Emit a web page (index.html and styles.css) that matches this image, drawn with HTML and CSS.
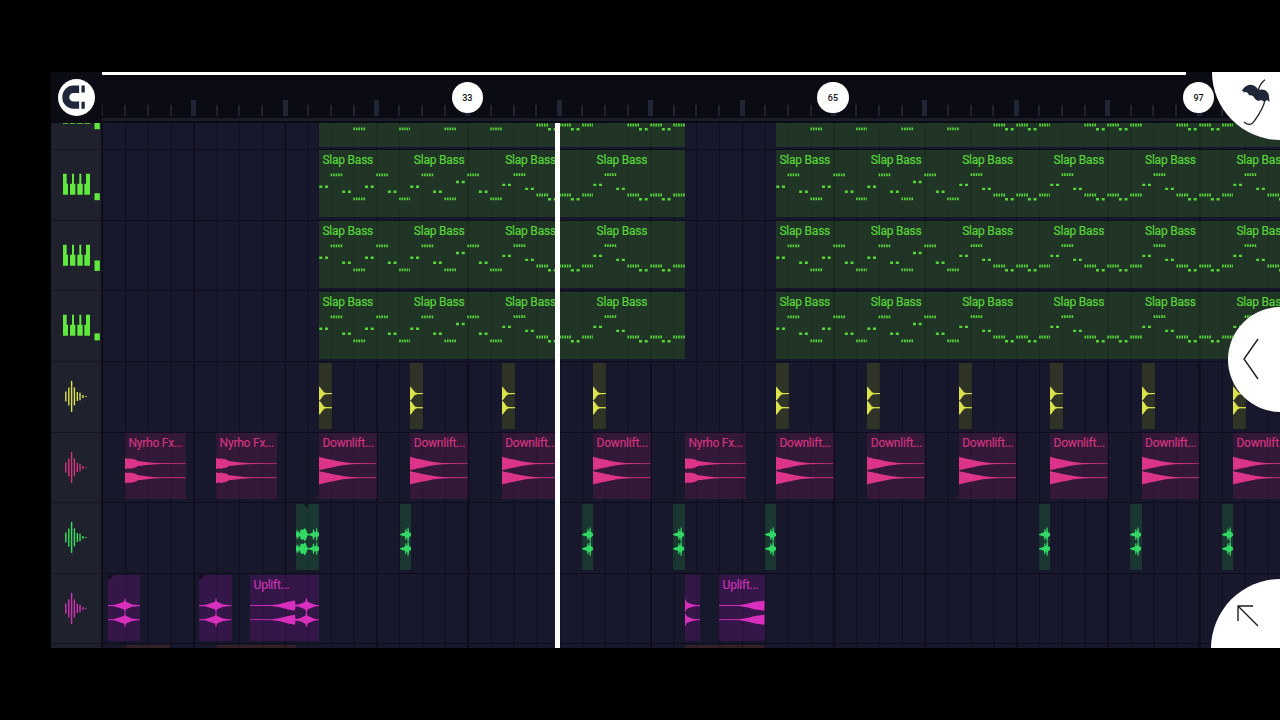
FILE: index.html
```html
<!DOCTYPE html>
<html lang="en">
<head>
<meta charset="utf-8">
<title>Playlist</title>
<link rel="stylesheet" href="styles.css">
</head>
<body>
<main class="app">
  <header class="header">
    <div class="corner">
      <button class="snap" aria-label="Snap">
        <svg viewBox="54 43 112 112"><path d="M118 63H100A33 35 0 0 0 100 133H118V111H101A13 13 0 0 1 101 85H118ZM125 63h10v21h-10zM125 112h10v21h-10z"/></svg>
      </button>
    </div>
    <div class="ruler">
      <div class="progress"></div>
      <div class="ticks"></div>
      <div class="ruler-edge"></div>
    </div>
  </header>
  <section class="playlist">
    <aside class="tracks"></aside>
    <div class="lanes"></div>
  </section>
  <div class="playhead"></div>
  <button class="round logo" aria-label="Menu">
    <svg viewBox="240 40 100 155"><path d="M245 83Q254 64 272 63Q289 65 295 79Q316 73 326 91L329 115L321 109L313 115Q307 108 301 110L294 112Q284 108 281 99Q275 94 267 95L264 89Q257 82 251 87L250 82Z"/><path class="stick" d="M315 48Q299 61 295 79M315 109C311 132 295 155 284 171Q271 191 252 175"/></svg>
  </button>
  <button class="round back" aria-label="Open panel">
    <svg viewBox="0 0 16 42"><path d="M15 1L1 21L15 41"/></svg>
  </button>
  <button class="round expand" aria-label="Expand">
    <svg viewBox="0 0 22 22"><path d="M1 16V1H16M1 1L21 21"/></svg>
  </button>
</main>
<script src="main.js"></script>
</body>
</html>
```
FILE: styles.css
```css
* { box-sizing: border-box; }
body {
  margin: 0;
  height: 720px;
  padding: 72px 0 72px 51px;
  background: #000;
  overflow: hidden;
  font-family: Roboto, "Liberation Sans", sans-serif;
}
button { border: 0; padding: 0; background: #fff; }
.app {
  position: relative;
  width: 1229px;
  height: 576px;
  overflow: hidden;
  background: #0b0b15;
}
.header { display: flex; height: 51px; background: #0b0b14; }
.corner { width: 51px; padding: 7px 0 0 7px; flex: none; }
.snap {
  display: block;
  width: 37px;
  height: 37px;
  border-radius: 50%;
}
.snap svg { display: block; width: 37px; height: 37px; fill: #20273a; }
.ruler {
  flex: 1;
  display: flex;
  flex-direction: column;
  overflow: hidden;
}
.progress { width: 1084px; height: 3px; background: #fff; flex: none; }
.ticks {
  display: grid;
  height: 43px;
  flex: none;
  align-items: end;
}
.tick {
  grid-area: 1 / 1;
  width: 2px;
  height: 11px;
  margin-bottom: 2.5px;
  background: #20232f;
}
.tick.major { width: 5px; height: 16px; background: #1f2535; }
.marker {
  grid-area: 1 / 1;
  z-index: 1;
  display: flex;
  align-items: center;
  justify-content: center;
  width: 31.4px;
  height: 31.4px;
  margin-bottom: 4.8px;
  border-radius: 50%;
  background: #fff;
  color: #111;
  font-size: 9px;
  font-weight: 500;
}
.ruler-edge { height: 3px; background: #1c1d2a; flex: none; }

.playlist { display: flex; height: 525px; overflow: hidden; }
.tracks { width: 51px; flex: none; background: #1f212c; border-right: 1px solid #10111a; }
.track { height: 70.65px; border-top: 1.4px solid #151620; }
.track svg { display: block; width: 50px; height: 69px; }
.track.partial, .lane.partial { margin-top: -44.65px; }
.lanes {
  flex: 1;
  overflow: hidden;
  background: #18182c;
  border-left: 1px solid #0b0b18;
}
.lane {
  display: grid;
  align-items: start;
  justify-items: start;
  height: 70.65px;
  border-top: 1.4px solid #0d0d1d;
  width: 1177px;
  overflow: hidden;
}
.gridlines { grid-area: 1 / 1; width: 1177px; height: 69.2px; display: block; }
.clip {
  grid-area: 1 / 1;
  height: 66px;
  margin-top: 0.8px;
  overflow: hidden;
  white-space: nowrap;
  display: grid;
}
.clip span {
  grid-area: 1 / 1;
  padding: 3px 0 0 3.4px;
  font-size: 12px;
  letter-spacing: -0.22px;
  line-height: 15px;
  -webkit-text-stroke: 0.2px currentColor;
}
.clip svg { grid-area: 1 / 1; display: block; height: 66px; }
.bass { color: #58d33a; background: rgba(40, 82, 32, 0.5); }
.bass.clip { height: 67px; margin-top: 0.3px; }
.hit { color: #dce24a; background: rgba(70, 80, 34, 0.5); }
.down { color: #dc3489; background: rgba(78, 24, 68, 0.5); }
.down span { color: #d0347f; }
.vox { color: #33d965; background: rgba(28, 88, 54, 0.5); }
.up { color: #d92fbd; background: rgba(80, 20, 100, 0.5); }
.up span { color: #c634ae; }
.amber { background: rgba(90, 45, 30, 0.4); }
.line { stroke: currentColor; }

.playhead {
  position: absolute;
  left: 504px;
  top: 51px;
  width: 5px;
  height: 525px;
  background: #fff;
}
.round {
  position: absolute;
  border-radius: 50%;
}
.round svg { position: absolute; fill: none; stroke: #1d1d26; stroke-width: 1.4; }
.logo { left: 1160.5px; top: -68px; width: 137px; height: 136px; }
.logo svg { left: 28px; top: 73.3px; width: 33.3px; height: 51.7px; fill: #1f2638; stroke: none; }
.logo .stick { fill: none; stroke: #22252e; stroke-width: 4; }
.back { left: 1177px; top: 235px; width: 105px; height: 105px; }
.back svg { left: 15px; top: 31px; width: 16px; height: 42px; }
.expand { left: 1160px; top: 507px; width: 139px; height: 139px; }
.expand svg { left: 26px; top: 26px; width: 22px; height: 22px; }
```
FILE: main.js
```js
const STEP = 22.85;   // two bars
const BLOCK = STEP * 4;
const at = (n) => 216 + n * BLOCK;

// Ruler
const ticks = document.querySelector('.ticks');
let ruler = '';
for (let i = 0; i * STEP < 1170; i++) {
  const major = i % 4 === 0 && i > 0;
  ruler += `<i class="tick${major ? ' major' : ''}" style="margin-left:${(i * STEP - (major ? 2.2 : 0.8)).toFixed(1)}px"></i>`;
}
[33, 65, 97].forEach((bar, i) => {
  ruler += `<b class="marker" style="margin-left:${((i + 1) * BLOCK * 4 - 16).toFixed(1)}px">${bar}</b>`;
});
ticks.innerHTML = ruler;

// Note patterns of the bass clips: pairs of notes alternate with runs of five
const LEVELS = {
  A: [36.8, 24.8, 41.8, 48.8, 36.8, 24.8, 41.8, 48.8],
  B: [36.8, 24.8, 41.8, 48.8, 32, 24.8, 41.8, 48.8],
  C: [34.9, 24.6, 38.9, 45, 49.2, 45, 49.2, 45],
};
const RUNS = { A: [1, 3, 5, 7], B: [1, 3, 5, 7], C: [1, 3, 5, 7] };
function notes(kind) {
  let d = '';
  LEVELS[kind].forEach((y, i) => {
    const x = i * BLOCK / 8;
    if (RUNS[kind].includes(i)) {
      for (let k = 0; k < 5; k++) d += `M${x + 0.2 + k * 2.5} ${y - 1.4}h1.6v2.8h-1.6z`;
    } else {
      for (const o of [0.3, 6]) d += `M${x + o} ${y - 1.2}h3v2.4h-3z`;
    }
  });
  return `<path fill="currentColor" d="${d}"/>`;
}

// Stereo waveform: envelope points [x, half height] mirrored round both channel axes
function wave(points, w) {
  let out = '';
  for (const c of [30.6, 44.7]) {
    const top = points.map(([x, h]) => `${x} ${c - h}`);
    const low = points.slice().reverse().map(([x, h]) => `${x} ${c + h}`);
    out += `<path fill="currentColor" d="M${top.concat(low).join('L')}Z"/><path class="line" stroke-opacity=".55" d="M0 ${c}H${w}"/>`;
  }
  return out;
}
const SHAPES = {
  hit: [[0, 7], [1.2, 6.2], [2.4, 4.6], [3.6, 3], [5, 1.3], [7, 0.6], [13, 0.5]],
  down: [[0, 7], [2, 6], [4, 5.8], [6, 5.2], [9, 4.6], [13, 3.8], [18, 2.7], [24, 1.6], [32, 0.7], [40, 0.3], [57, 0.2]],
  nyrho: [[0, 5.5], [3, 4.8], [5, 5.2], [8, 4.5], [10, 4.2], [13, 2.5], [20, 1.7], [28, 0.8], [36, 0.3], [60, 0.2]],
  vox: [[0, 0.3], [3, 1.5], [5, 2], [5.4, 5.5], [6.2, 5.5], [6.6, 2.8], [7.3, 3.2], [7.6, 7], [8.6, 7], [9, 2.6], [11, 1.2]],
  voxLong: [[0, 6], [0.8, 1.5], [1.6, 4], [2.4, 4], [3, 1.5], [4, 2], [4.8, 5], [8, 5], [8.5, 6.5], [9.2, 6], [10, 5], [11, 2], [12, 0.4], [14, 1], [16.5, 1.6], [17, 5], [18, 5], [18.6, 2], [20, 3], [20.3, 6.5], [21, 6.5], [21.5, 2], [23, 2]],
  peak: [[0, 0.3], [6, 0.6], [11, 2.2], [14, 3.2], [16.2, 4], [16.6, 7], [17.4, 7], [17.8, 4], [20, 3], [24, 1.2], [32, 0.3]],
  fall: [[0, 7], [0.8, 5.5], [1.6, 3.6], [5, 2], [9, 0.8], [15, 0.4]],
  rise: [[0, 0.3], [20, 0.4], [29, 2], [36, 3.8], [45.5, 5]],
  riseLong: [[0, 0.3], [21, 0.3], [30, 1.6], [38, 3.8], [45, 5], [45.4, 1], [48, 1], [52, 2.4], [55.5, 4.2], [56, 7], [57, 7], [57.5, 4], [61, 2.4], [65, 0.8], [69, 0.3]],
};

function clip(cls, x, w, art = '', label = '') {
  return `<div class="clip ${cls}" style="margin-left:${x.toFixed(1)}px;width:${w.toFixed(1)}px">` +
    `<svg width="${w}" height="66" viewBox="0 0 ${w} 66">${art}</svg>${label ? `<span>${label}</span>` : ''}</div>`;
}

let g = '';
for (let i = 1; i < 52; i++) {
  const w = i % 16 === 0 ? 2.4 : i % 4 === 0 ? 1.6 : 1;
  g += `<path stroke="#0c0c1c" stroke-opacity="${i % 4 ? 0.7 : 0.9}" stroke-width="${w}" d="M${(i * STEP - 0.3).toFixed(1)} 0V70"/>`;
}
const gridlines = `<svg class="gridlines">${g}</svg>`;

const bassLane = (label) => [[0, 'A'], [1, 'B'], [2, 'C'], [3, 'C'], [5, 'A'], [6, 'B'], [7, 'C'], [8, 'C'], [9, 'C'], [10, 'C']]
  .map(([n, k]) => clip('bass', at(n), BLOCK, notes(k), label)).join('');
const bass = bassLane('Slap Bass');
const starts = [0, 1, 2, 3, 5, 6, 7, 8, 9, 10];
const hits = starts.map((n) => clip('hit', at(n), 13, wave(SHAPES.hit, 13))).join('');
const downs = starts.map((n) => clip('down', at(n), 57.5, wave(SHAPES.down, 57.5), 'Downlift...')).join('') +
  [22, 113.2, 582].map((x) => clip('down', x, 61, wave(SHAPES.nyrho, 61), 'Nyrho Fx...')).join('');
const vox = clip('vox', 193, 23.3, wave(SHAPES.voxLong, 23) + '<path fill="#10151f" d="M8 0H12V5Z"/>') +
  [296.5, 479, 570.4, 662, 935.8, 1027.3, 1119].map((x) => clip('vox', x, 11.3, wave(SHAPES.vox, 11.3))).join('');
const notch = '<path fill="#140c20" d="M0 0H6L2 4H0Z"/>';
const ups = clip('up', 5, 32.3, wave(SHAPES.peak, 32.3) + notch) +
  clip('up', 96.3, 32.7, wave(SHAPES.peak, 32.7) + notch) +
  clip('up', 147.2, 68.8, wave(SHAPES.riseLong, 68.8), 'Uplift...') +
  clip('up', 582, 15, wave(SHAPES.fall, 15)) +
  clip('up', 616.2, 45.7, wave(SHAPES.rise, 45.7), 'Uplift...');
const ambers = clip('amber', 22, 45) + clip('amber', 113.4, 80) + clip('amber', 582, 80);

const piano = (y, h) => `<svg viewBox="0 0 50 69" fill="#61e83f"><path d="M12 23.7h3.7v10h1.3v11H12zM21 23.7h2v10h1.4v11H19v-11h2zM28.3 23.7h2v10h1.4v11h-5.4v-11h2zM35 23.7h4v21h-5.7v-11H35z"/><path d="M43.5 ${y}h5.3v${h}h-5.3z"/></svg>`;
function audio(color) {
  const bars = [[14.8, 10], [17.8, 18], [20.6, 31], [23.4, 18], [26.3, 9], [29, 7.5], [32, 3], [35, 1]];
  return `<svg viewBox="0 0 50 69" stroke="${color}" stroke-width="1.4">` +
    bars.map(([x, h]) => `<path d="M${x} ${34.4 - h / 2}v${h}"/>`).join('') + '</svg>';
}

const rows = [
  [piano(43.2, 7), bassLane(''), ' partial'],
  [piano(43.2, 7), bass, ''],
  [piano(39.4, 10.5), bass, ''],
  [piano(42.4, 7), bass, ''],
  [audio('#dce24a'), hits, ''],
  [audio('#d5347f'), downs, ''],
  [audio('#33e05f'), vox, ''],
  [audio('#d032b4'), ups, ''],
  ['', ambers, ''],
];
document.querySelector('.tracks').innerHTML = rows.map(([icon, , c]) => `<div class="track${c}">${icon}</div>`).join('');
document.querySelector('.lanes').innerHTML = rows.map(([, clips, c]) => `<div class="lane${c}">${gridlines}${clips}</div>`).join('');
```
